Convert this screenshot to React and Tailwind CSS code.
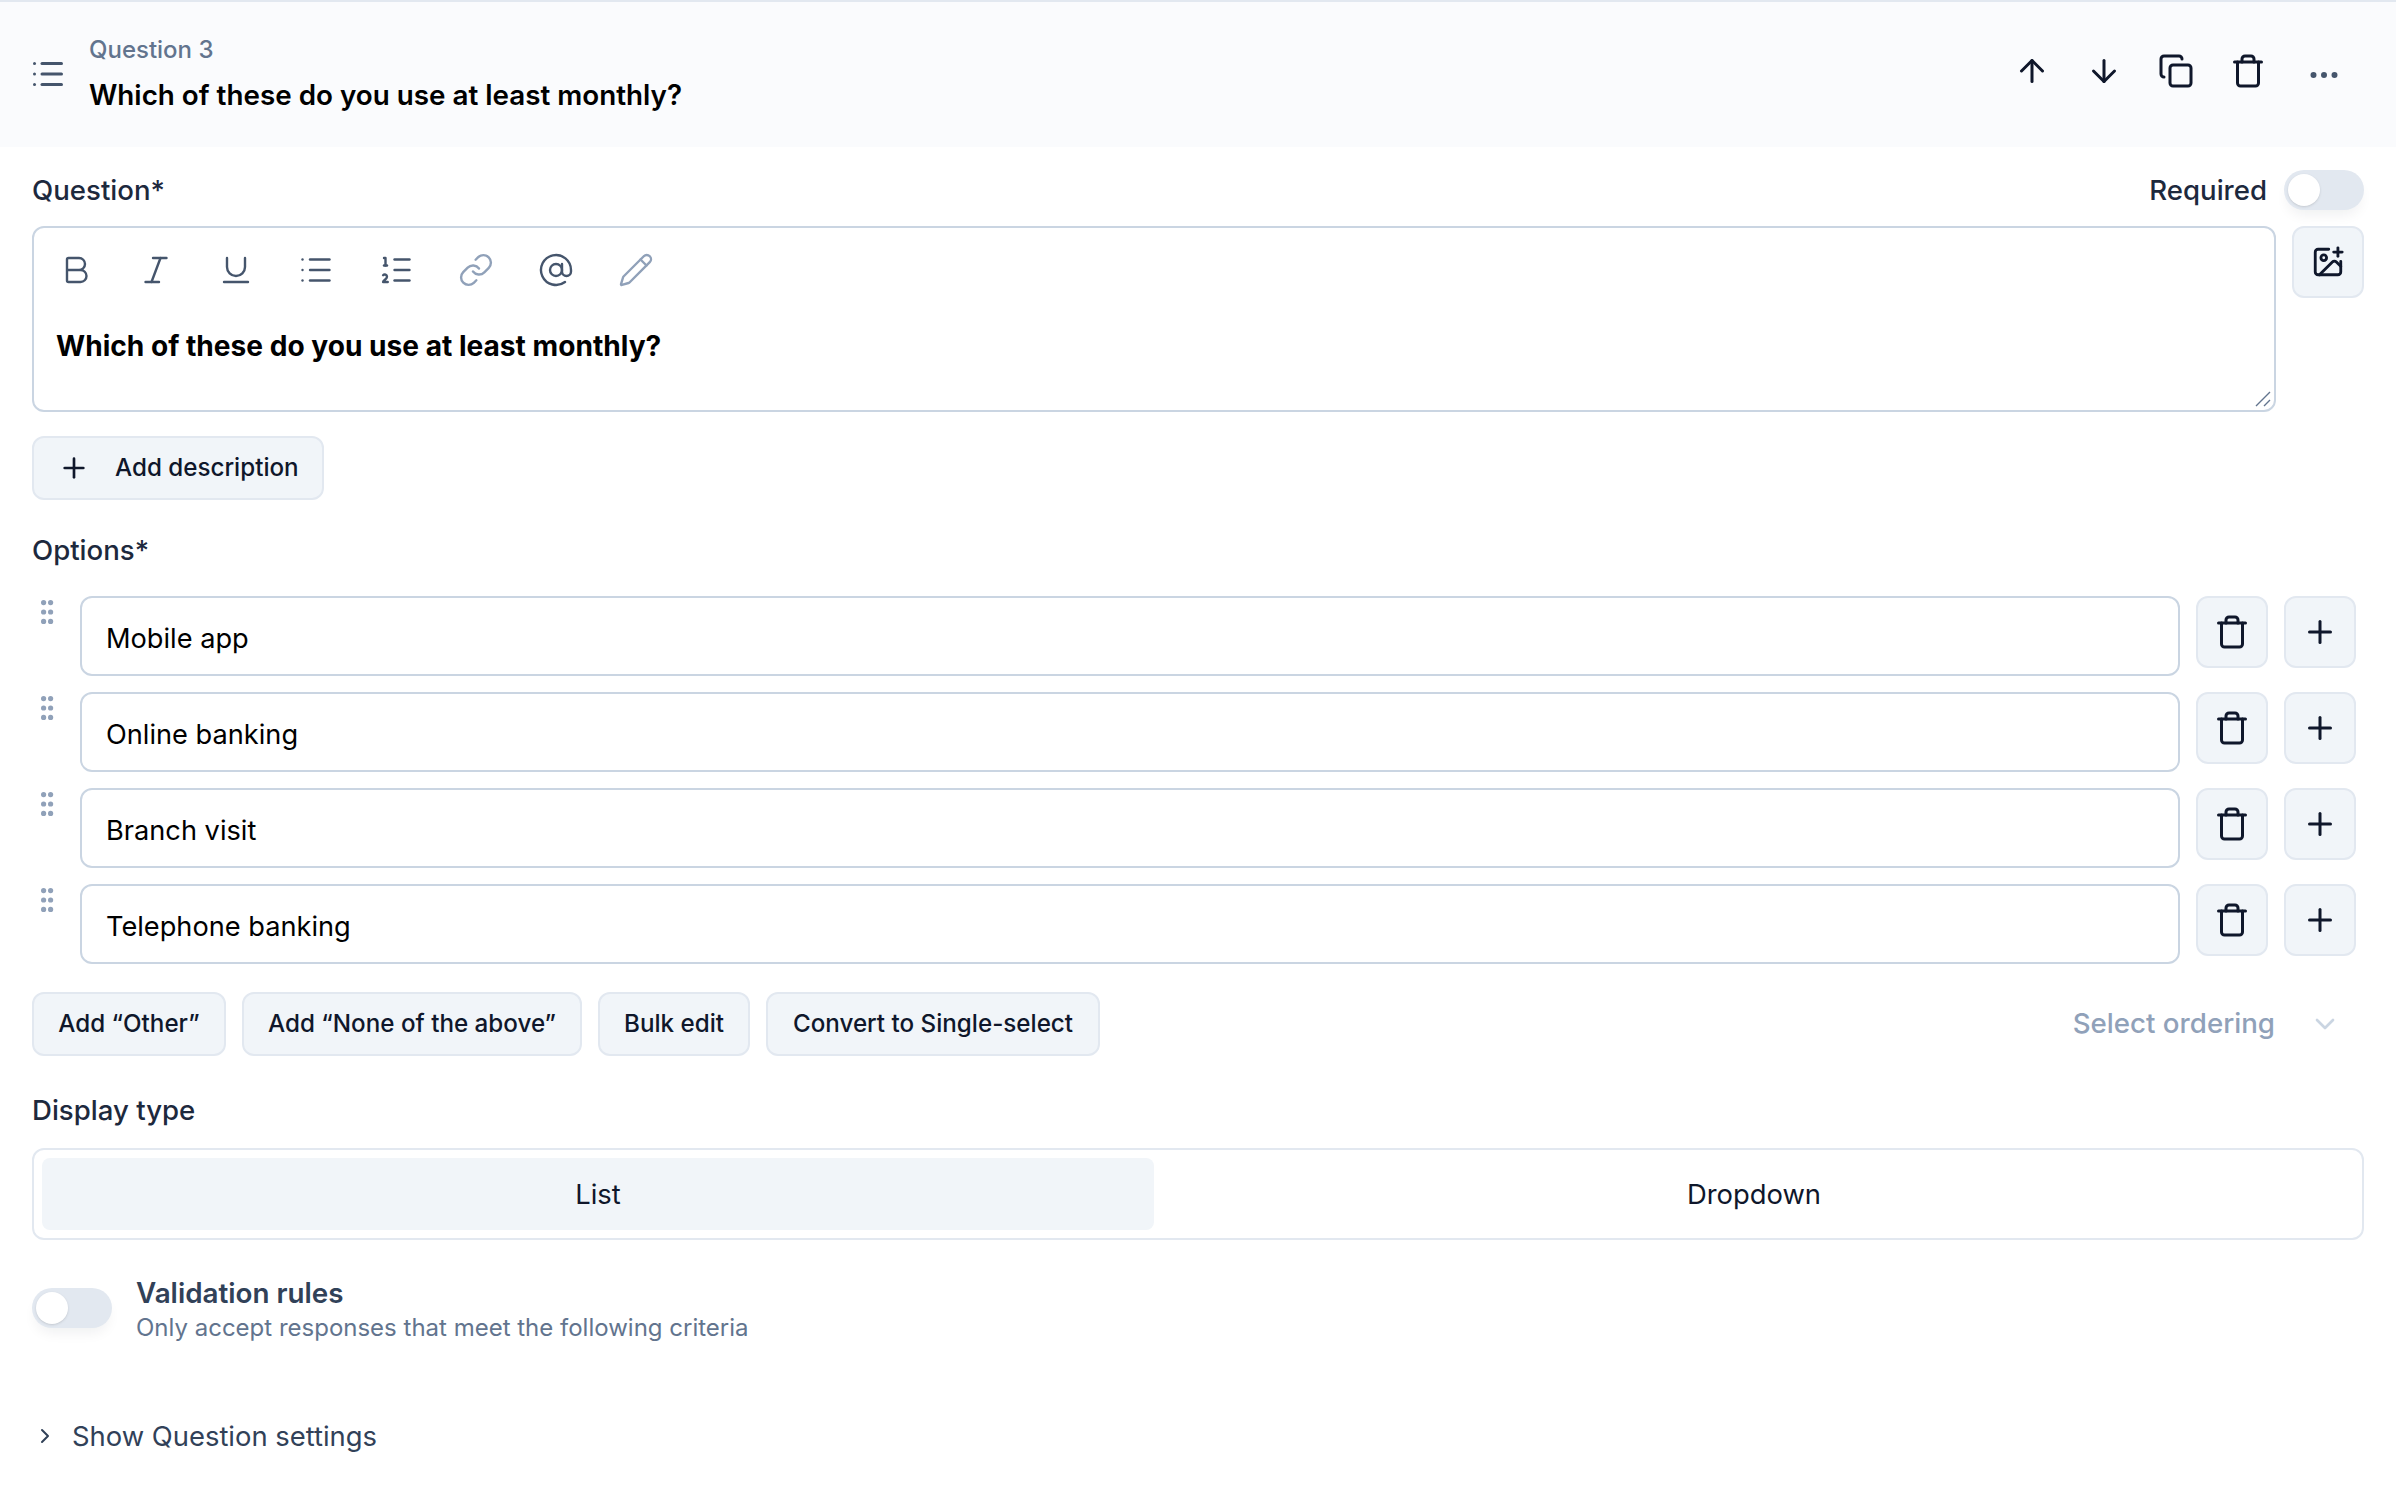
import {
  ArrowDown,
  ArrowUp,
  AtSign,
  Bold,
  ChevronDown,
  ChevronRight,
  Copy,
  Ellipsis,
  ImagePlus,
  Italic,
  Link,
  List,
  ListOrdered,
  Pencil,
  Plus,
  Trash,
  Underline,
} from 'lucide-react'

const options = ['Mobile app', 'Online banking', 'Branch visit', 'Telephone banking']

const toolbar = [
  { Icon: Bold, color: 'text-slate-600' },
  { Icon: Italic, color: 'text-slate-600' },
  { Icon: Underline, color: 'text-slate-600' },
  { Icon: List, color: 'text-slate-600' },
  { Icon: ListOrdered, color: 'text-slate-600' },
  { Icon: Link, color: 'text-slate-400' },
  { Icon: AtSign, color: 'text-slate-600' },
  { Icon: Pencil, color: 'text-slate-400' },
]

function Toggle() {
  return (
    <div className="flex h-10 w-20 shrink-0 items-center rounded-full bg-slate-200 pl-1 shadow-[0_8px_14px_-4px_rgba(15,23,42,0.07)]">
      <div className="h-8 w-8 rounded-full bg-white shadow-sm" />
    </div>
  )
}

function SquareButton({ children }) {
  return (
    <button
      type="button"
      className="flex h-[72px] w-[72px] shrink-0 items-center justify-center rounded-xl border-2 border-slate-200 bg-slate-100 text-slate-900"
    >
      {children}
    </button>
  )
}

function ActionButton({ children, className = '' }) {
  return (
    <button
      type="button"
      className={`flex h-16 items-center rounded-xl border-2 border-slate-200 bg-slate-100 text-[24.2px] font-medium text-slate-900 ${className}`}
    >
      {children}
    </button>
  )
}

function Grip() {
  return (
    <svg width="14" height="24" viewBox="0 0 14 24" className="mt-1 ml-[9px] shrink-0 fill-slate-400">
      <circle cx="2.6" cy="2.6" r="2.6" />
      <circle cx="9.6" cy="2.6" r="2.6" />
      <circle cx="2.6" cy="12" r="2.6" />
      <circle cx="9.6" cy="12" r="2.6" />
      <circle cx="2.6" cy="21.4" r="2.6" />
      <circle cx="9.6" cy="21.4" r="2.6" />
    </svg>
  )
}

export default function App() {
  return (
    <div className="h-[1488px] w-full overflow-hidden bg-white font-['Inter',sans-serif]">
      <header className="flex h-[147px] items-center border-t-2 border-slate-200 bg-[#fafbfd] pl-[32px]">
        <List size={36} strokeWidth={2} className="-ml-[2px] mb-[2px] text-slate-600" />
        <div className="ml-[23px] flex flex-col pb-[5px]">
          <span className="text-[24px] leading-9 font-medium text-slate-500">Question 3</span>
          <span className="mt-[9px] text-[27.8px] leading-9 font-semibold text-black">
            Which of these do you use at least monthly?
          </span>
        </div>
        <div className="mr-[54px] mb-[7px] ml-auto flex items-center gap-9 text-slate-900">
          <ArrowUp size={36} strokeWidth={2} />
          <ArrowDown size={36} strokeWidth={2} />
          <Copy size={36} strokeWidth={2} />
          <Trash size={36} strokeWidth={2} />
          <Ellipsis size={36} strokeWidth={2} className="mt-2 ml-[4px] text-slate-600" />
        </div>
      </header>

      <main className="flex flex-col px-8">
        <div className="mt-[23px] flex h-10 items-center">
          <span className="pt-[2px] text-[27.6px] font-medium text-slate-800">Question*</span>
          <span className="mr-[17px] ml-auto pt-[2px] text-[27.6px] font-medium text-slate-800">Required</span>
          <Toggle />
        </div>

        <div className="mt-4 flex gap-4">
          <div className="relative h-[186px] flex-1 rounded-xl border-2 border-slate-300 bg-white">
            <div className="flex gap-11 pt-6 pl-[24px]">
              {toolbar.map(({ Icon, color }, i) => (
                <Icon key={i} size={36} strokeWidth={1.6} className={color} />
              ))}
            </div>
            <p className="mt-10 pl-[22px] text-[28.1px] leading-9 font-bold text-black">
              Which of these do you use at least monthly?
            </p>
            <svg
              width="16"
              height="16"
              viewBox="0 0 16 16"
              className="absolute right-[3px] bottom-[3px] stroke-slate-500"
              strokeWidth="1.4"
              fill="none"
            >
              <path d="M1 15 15 1M9 15l6-6" />
            </svg>
          </div>
          <SquareButton>
            <ImagePlus size={34} strokeWidth={2} />
          </SquareButton>
        </div>

        <ActionButton className="mt-6 w-[292px] pl-[24px]">
          <Plus size={32} strokeWidth={2} className="mr-[25px]" />
          Add description
        </ActionButton>

        <span className="mt-8 text-[27.6px] leading-9 font-medium text-slate-800">Options*</span>

        <div className="mt-7 flex flex-col gap-4 pr-2">
          {options.map((option) => (
            <div key={option} className="flex items-start">
              <Grip />
              <div className="ml-[25px] flex h-20 flex-1 items-center rounded-xl border-2 border-slate-300 bg-white pt-[6px] pl-[24px] text-[27.2px] text-black">
                {option}
              </div>
              <div className="ml-4 flex gap-4">
                <SquareButton>
                  <Trash size={36} strokeWidth={2} />
                </SquareButton>
                <SquareButton>
                  <Plus size={36} strokeWidth={2} />
                </SquareButton>
              </div>
            </div>
          ))}
        </div>

        <div className="mt-7 flex items-center">
          <div className="flex gap-4">
            <ActionButton className="w-[194px] justify-center">Add “Other”</ActionButton>
            <ActionButton className="w-[340px] justify-center">Add “None of the above”</ActionButton>
            <ActionButton className="w-[152px] justify-center">Bulk edit</ActionButton>
            <ActionButton className="w-[334px] justify-center">Convert to Single-select</ActionButton>
          </div>
          <span className="ml-auto text-[27.7px] font-medium text-slate-400">Select ordering</span>
          <ChevronDown size={32} strokeWidth={2} className="mr-[23px] ml-[34px] text-slate-300" />
        </div>

        <span className="mt-9 text-[27.6px] leading-9 font-medium text-slate-800">Display type</span>

        <div className="mt-5 flex h-[92px] items-center rounded-xl border-2 border-slate-200 px-2 text-[27.4px] text-slate-900">
          <div className="flex h-[72px] w-[1112px] shrink-0 items-center justify-center rounded-lg bg-slate-100 pt-[2px]">
            List
          </div>
          <div className="flex h-[72px] flex-1 items-center justify-center pt-[2px]">Dropdown</div>
        </div>

        <div className="mt-12 flex items-start">
          <Toggle />
          <div className="ml-6 -mt-[13px] flex flex-col">
            <span className="text-[27.8px] leading-9 font-semibold text-slate-700">Validation rules</span>
            <span className="text-[24px] leading-[34px] text-slate-500">
              Only accept responses that meet the following criteria
            </span>
          </div>
        </div>

        <div className="mt-[73px] flex items-center">
          <ChevronRight size={24} strokeWidth={2} className="ml-[1px] text-slate-700" />
          <span className="ml-[15px] text-[27.4px] leading-9 text-slate-700">Show Question settings</span>
        </div>
      </main>
    </div>
  )
}
